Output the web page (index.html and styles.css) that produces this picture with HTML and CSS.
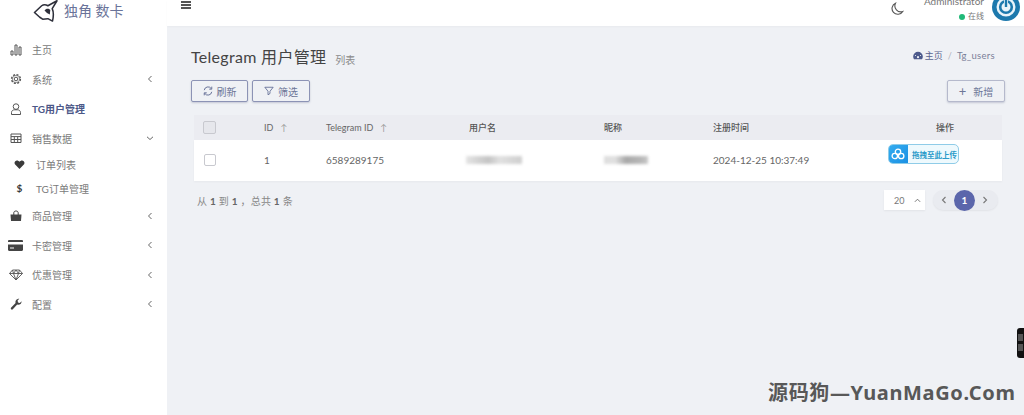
FILE: index.html
```html
<!DOCTYPE html>
<html lang="zh-CN">
<head>
<meta charset="utf-8">
<title>Telegram 用户管理</title>
<link rel="stylesheet" href="styles.css">
</head>
<body>
<div class="app">
  <aside class="sidebar">
    <div class="brand">
      <svg class="brand-icon" viewBox="0 0 26 24" width="25" height="23"><path d="M1.500 13 L9 6 C11 4.500 13.500 4.800 15.500 6 L25 .8 L20 9 C21.800 13 21.500 17 20.300 22 L15.500 19.500 L10 20 L7 18 Z" fill="none" stroke="#2d2f3a" stroke-width="1.600" stroke-linejoin="round"/><path d="M12 11 C13.500 8.500 16.500 8.500 18 10.500 L17.500 15 L14.500 13.500 Z" fill="#2d2f3a"/></svg>
      <span class="brand-name">独角 数卡</span>
    </div>
    <nav class="nav">
      <a class="nav-item">
        <svg class="ico" viewBox="0 0 12 12"><path d="M1 7h2v4H1zM5 1h2v10H5zM9 3h2v8H9z" fill="none" stroke="#555" stroke-width="1"/></svg>
        <span class="nav-label">主页</span>
      </a>
      <a class="nav-item">
        <svg class="ico" viewBox="0 0 12 12"><circle cx="6" cy="6" r="1.800" fill="none" stroke="#555"/><circle cx="6" cy="6" r="4.400" fill="none" stroke="#555" stroke-width="1.400" stroke-dasharray="2 1.450"/><circle cx="6" cy="6" r="3.600" fill="none" stroke="#555" stroke-width=".6"/></svg>
        <span class="nav-label">系统</span>
        <svg class="chev" viewBox="0 0 8 8"><path d="M5.500 1 L2.500 4 L5.500 7" fill="none" stroke="#666"/></svg>
      </a>
      <a class="nav-item is-active">
        <svg class="ico" viewBox="0 0 12 12"><circle cx="6" cy="3.600" r="2.800" fill="none" stroke="#555"/><path d="M1.500 11.500 V9.500 C1.500 7.800 3 6.800 4.500 6.800 H7.500 C9 6.800 10.500 7.800 10.500 9.500 V11.500 Z" fill="none" stroke="#555"/></svg>
        <span class="nav-label">TG用户管理</span>
      </a>
      <a class="nav-item">
        <svg class="ico" viewBox="0 0 12 12"><path d="M1 2h10v8.500H1zM1 4.600h10M1 7.500h10M4.300 4.600v6M7.700 4.600v6" fill="none" stroke="#555"/></svg>
        <span class="nav-label">销售数据</span>
        <svg class="chev" viewBox="0 0 8 8"><path d="M1 2.800 L4 5.500 L7 2.800" fill="none" stroke="#666"/></svg>
      </a>
      <div class="subnav">
        <a class="sub-item">
          <svg class="sub-ico" viewBox="0 0 12 12"><path d="M6 11 L1 5.800 C-.2 3.500 1.400 1.500 3.200 1.500 C4.400 1.500 5.400 2.100 6 3 C6.600 2.100 7.600 1.500 8.800 1.500 C10.600 1.500 12.200 3.500 11 5.800 Z" fill="#3a3a3a"/></svg>
          <span class="nav-label">订单列表</span>
        </a>
        <a class="sub-item">
          <span class="sub-ico dollar">$</span>
          <span class="nav-label">TG订单管理</span>
        </a>
      </div>
      <a class="nav-item">
        <svg class="ico" viewBox="0 0 12 12"><path d="M.5 4.500h11L11 11H1z" fill="#444"/><path d="M3.800 5V2.800C3.800 1.600 4.800 1 6 1S8.200 1.600 8.200 2.800V5" fill="none" stroke="#444"/></svg>
        <span class="nav-label">商品管理</span>
        <svg class="chev" viewBox="0 0 8 8"><path d="M5.500 1 L2.500 4 L5.500 7" fill="none" stroke="#666"/></svg>
      </a>
      <a class="nav-item">
        <svg class="ico ico-wide" viewBox="0 0 15 11"><path d="M0 1.200C0 .5.500 0 1.200 0h12.600c.7 0 1.200.5 1.200 1.200V2H0zM0 4.500h15v5.300c0 .7-.5 1.200-1.200 1.200H1.200C.5 11 0 10.500 0 9.800zM2 7.500v1h4v-1z" fill="#444"/></svg>
        <span class="nav-label">卡密管理</span>
        <svg class="chev" viewBox="0 0 8 8"><path d="M5.500 1 L2.500 4 L5.500 7" fill="none" stroke="#666"/></svg>
      </a>
      <a class="nav-item">
        <svg class="ico ico-gem" viewBox="0 0 14 12"><path d="M3.500 1h7l3 3.500L7 11 .5 4.500zM.5 4.500h13M4.500 4.500 7 11l2.500-6.500M3.500 1l1 3.500L7 1l2.500 3.500 1-3.500" fill="none" stroke="#555" stroke-width=".9"/></svg>
        <span class="nav-label">优惠管理</span>
        <svg class="chev" viewBox="0 0 8 8"><path d="M5.500 1 L2.500 4 L5.500 7" fill="none" stroke="#666"/></svg>
      </a>
      <a class="nav-item">
        <svg class="ico" viewBox="0 0 12 12"><path d="M1.500 11.500 C.6 10.800.6 10 1.200 9.400L5.600 5C5 3 6.500.6 9.300.8L7.600 2.600l.4 1.800 1.800.5 1.800-1.700C11.700 6 9.200 7.300 7.200 6.600L2.800 11.200c-.4.500-.9.600-1.300.3z" fill="#444"/></svg>
        <span class="nav-label">配置</span>
        <svg class="chev" viewBox="0 0 8 8"><path d="M5.500 1 L2.500 4 L5.500 7" fill="none" stroke="#666"/></svg>
      </a>
    </nav>
  </aside>

  <div class="main">
    <header class="topbar">
      <div class="hamburger"><i></i><i></i><i></i></div>
      <div class="topbar-right">
        <svg class="moon" viewBox="0 0 14 14" width="14" height="14"><path d="M5.500 1.200 A5.800 5.800 0 1 0 12.800 9.500 A6 6 0 0 1 5.500 1.200 Z" fill="none" stroke="#555" stroke-width="1.100"/></svg>
        <div class="user">
          <div class="user-name">Administrator</div>
          <div class="user-status"><i class="dot"></i>在线</div>
        </div>
        <svg class="avatar" viewBox="0 0 28 28" width="28" height="28"><circle cx="14" cy="14" r="14" fill="#1d79ad"/><circle cx="14" cy="14" r="9.500" fill="#e9f4fa"/><circle cx="14" cy="14" r="5.800" fill="none" stroke="#1d79ad" stroke-width="2.600"/><path d="M14 6v8" stroke="#e9f4fa" stroke-width="4"/><path d="M14 7v7" stroke="#1d79ad" stroke-width="2.400"/></svg>
      </div>
    </header>

    <section class="content">
      <div class="page-head">
        <div class="page-title"><h1>Telegram 用户管理</h1><small>列表</small></div>
        <div class="crumbs">
          <svg viewBox="0 0 12 10" width="10" height="9"><path d="M6 .5A5.800 5.800 0 0 0 .2 6.300c0 1.200.4 2.300 1 3.200h9.600c.6-.9 1-2 1-3.200A5.800 5.800 0 0 0 6 .5z" fill="#4d5a8c"/><circle cx="6" cy="7" r="1.300" fill="#eff1f5"/><circle cx="3" cy="5" r=".7" fill="#eff1f5"/><circle cx="9" cy="5" r=".7" fill="#eff1f5"/></svg>
          <a>主页</a><span class="sep">/</span><span class="crumb-cur">Tg_users</span>
        </div>
      </div>

      <div class="toolbar">
        <div class="btn-group">
          <button class="btn">
            <svg viewBox="0 0 12 12" width="10" height="10"><path d="M1.500 5A4.600 4.600 0 0 1 9.800 3M10.500 7A4.600 4.600 0 0 1 2.200 9" fill="none" stroke="#5c6791" stroke-width="1.100"/><path d="M10.500 .8v3H7.500M1.500 11.200v-3h3" fill="none" stroke="#5c6791" stroke-width="1.100"/></svg>刷新
          </button>
          <button class="btn">
            <svg viewBox="0 0 12 12" width="10" height="10"><path d="M1 1.500h10L7.200 6.300V9L4.800 10.500V6.300z" fill="none" stroke="#5c6791"/></svg>筛选
          </button>
        </div>
        <button class="btn btn-add"><span class="plus">+</span>新增</button>
      </div>

      <div class="table">
        <div class="row row-head">
          <span class="cb"></span>
          <span>ID<em class="sort">↑</em></span>
          <span>Telegram ID<em class="sort">↑</em></span>
          <b>用户名</b>
          <b>昵称</b>
          <b>注册时间</b>
          <b class="th-action">操作</b>
        </div>
        <div class="row row-body">
          <span class="cb cb-body"></span>
          <span>1</span>
          <span>6589289175</span>
          <span class="mask mask-a"></span>
          <span class="mask mask-b"></span>
          <span>2024-12-25 10:37:49</span>
          <span class="upload">
            <span class="upload-ico"><svg viewBox="0 0 14 12" width="14" height="12"><circle cx="7" cy="3.800" r="2.700" fill="none" stroke="#fff" stroke-width="1.300"/><circle cx="3.800" cy="8" r="2.700" fill="none" stroke="#fff" stroke-width="1.300"/><circle cx="10.200" cy="8" r="2.700" fill="none" stroke="#fff" stroke-width="1.300"/></svg></span>
            <span class="upload-text">拖拽至此上传</span>
          </span>
        </div>
      </div>

      <div class="foot">
        <div class="foot-info">从 <b>1</b> 到 <b>1</b> ，总共 <b>1</b> 条</div>
        <div class="pager">
          <div class="per-page"><span>20</span><svg viewBox="0 0 8 8" width="7" height="7"><path d="M1 5.500 L4 2.500 L7 5.500" fill="none" stroke="#666"/></svg></div>
          <div class="pages">
            <svg viewBox="0 0 8 8" width="8" height="8"><path d="M5.500 1 L2.500 4 L5.500 7" fill="none" stroke="#777" stroke-width="1.100"/></svg>
            <span class="page-cur">1</span>
            <svg viewBox="0 0 8 8" width="8" height="8"><path d="M2.500 1 L5.500 4 L2.500 7" fill="none" stroke="#777" stroke-width="1.100"/></svg>
          </div>
        </div>
      </div>
    </section>
  </div>
</div>
<div class="side-tab"><i></i><i></i></div>
<div class="watermark">源码狗—YuanMaGo.Com</div>
</body>
</html>
```

FILE: styles.css
```css
* { box-sizing: border-box; }
html, body { margin: 0; height: 100%; overflow: hidden; }
body {
  font-family: Lato, "Noto Sans CJK SC", sans-serif;
  background: #eff1f5;
  color: #666;
  font-size: 10px;
}
.app { display: flex; height: 415px; }

/* sidebar */
.sidebar { width: 167px; flex: none; background: #fff; }
.brand { height: 35px; padding: 0 0 13px 33px; display: flex; align-items: center; gap: 6px; }
.brand-icon { flex: none; }
.brand-name { font-size: 14px; color: #6a7399; line-height: 20px; white-space: nowrap; }
.nav { display: flex; flex-direction: column; }
.nav-item { height: 29.5px; display: flex; align-items: center; padding: 0 13px 0 10px; }
.nav-label { color: #7a7a7a; font-size: 10px; white-space: nowrap; }
.ico { width: 12px; height: 12px; flex: none; margin-right: 10px; }
.ico-wide { width: 15px; height: 11px; margin-left: -2px; margin-right: 9px; }
.ico-gem { width: 14px; height: 12px; margin-left: -1px; margin-right: 9px; }
.chev { width: 8px; height: 8px; margin-left: auto; flex: none; }
.is-active .nav-label { color: #4c5888; font-weight: 700; }
.subnav { display: flex; flex-direction: column; margin-bottom: 1px; }
.sub-item { height: 23.5px; display: flex; align-items: center; padding-left: 14px; }
.sub-ico { width: 11px; height: 11px; margin-right: 11px; flex: none; }
.dollar { font-size: 10px; font-weight: 700; color: #3a3a3a; line-height: 11px; text-align: center; }

/* main */
.main { flex: 1; min-width: 0; display: flex; flex-direction: column; }
.topbar {
  height: 26px; flex: none; background: #fff; display: flex; justify-content: space-between;
  padding: 0 4px 0 14px; overflow: hidden;
  box-shadow: 0 1px 2px rgba(0,0,0,.03);
}
.hamburger { display: flex; flex-direction: column; gap: 1.500px; width: 10px; padding-top: 1px; }
.hamburger i { display: block; height: 1.500px; background: #555; }
.topbar-right { display: flex; align-items: flex-start; }
.moon { margin-top: 2px; margin-right: 20px; }
.user { text-align: right; margin-top: -6px; margin-right: 8px; }
.user-name { font-size: 10px; line-height: 14px; color: #777; }
.user-status { font-size: 8px; line-height: 11px; padding-top: 3px; color: #777; display: flex; align-items: center; justify-content: flex-end; }
.dot { width: 6px; height: 6px; border-radius: 50%; background: #21b978; margin-right: 3px; }
.avatar { margin-top: -7px; flex: none; }

.content { padding: 21px 19px 0 24px; flex: 1; }
.page-head { display: flex; justify-content: space-between; align-items: center; height: 20px; }
.page-title { display: flex; align-items: center; gap: 9px; }
.page-title h1 { margin: 0; font-size: 16px; font-weight: 400; color: #444; line-height: 20px; letter-spacing: .3px; white-space: nowrap; }
.page-title small { font-size: 10px; color: #8a8a8a; padding-top: 4px; }
.crumbs { display: flex; align-items: center; font-size: 9px; color: #5a648f; gap: 2px; margin: -4px 10px 0 0; }
.sep { color: #b0b3bd; margin: 0 3px; }
.crumb-cur { color: #7a8098; font-size: 9.500px; letter-spacing: .3px; }
.toolbar { display: flex; justify-content: space-between; margin-top: 13px; height: 22px; }
.btn-group { display: flex; gap: 4px; }
.btn {
  width: 58px; height: 22px; background: #eff1f5; border: 1px solid #8c93b5; border-radius: 2px;
  box-shadow: 0 1px 2px rgba(70,80,120,.25); color: #6d7697; font-family: inherit; font-size: 10px;
  display: flex; align-items: center; justify-content: center; gap: 4px; padding: 0;
}
.btn-group .btn:first-child { width: 57px; }
.btn-add { border-color: #b5b9cc; }
.plus { font-size: 13px; line-height: 14px; margin-right: 3px; }

.table { margin: 13px 3px 0; }
.row { display: grid; grid-template-columns: 70px 62px 143px 135px 109px 175px 1fr; align-items: center; }
.row-head { height: 25px; background: #ebecf1; font-size: 9px; color: #666; }
.row-head b { color: #555; font-size: 9px; font-weight: 500; }
.row-head .th-action { padding-left: 48px; }
.row-body { height: 41px; padding-bottom: 2px; background: #fff; font-size: 10px; color: #666; box-shadow: 0 1px 2px rgba(0,0,0,.04); }
.sort { font-style: normal; color: #999; margin-left: 7px; }
.cb { width: 13px; height: 13px; border: 1px solid #c8c9cf; background: #e6e7ec; border-radius: 2px; margin-left: 9px; }
.cb-body { width: 12px; height: 12px; background: #fff; margin-left: 10px; }
.mask { height: 8px; background: linear-gradient(90deg, #e4e4e4, #c4c4c4 40%, #e0e0e0 60%, #cfcfcf); filter: blur(1.500px); }
.mask-a { width: 56px; margin-left: -3px; }
.mask-b { width: 44px; background: linear-gradient(90deg, #dedede, #e0e0e0 25%, #a8a8a8 50%, #b8b8b8 85%, #c8c8c8); }
.upload {
  display: flex; width: 71px; height: 20px; border: 1px solid #8fcce8; border-radius: 5px; background: #eef9fd; overflow: hidden; align-items: center; margin-top: -11px;
}
.upload-ico { width: 20px; height: 20px; margin: -1px 0 -1px -1px; flex: none; background: linear-gradient(135deg, #35aef0, #1a8fe3); display: flex; align-items: center; justify-content: center; }
.upload-text { font-size: 7.500px; font-weight: 700; color: #2b9bc9; padding-left: 4px; white-space: nowrap; }

.foot { display: flex; justify-content: space-between; margin: 8px 7px 0 6px; align-items: center; height: 22px; }
.foot-info { font-size: 10px; color: #888; letter-spacing: .2px; }
.foot-info b { color: #666; }
.pager { display: flex; align-items: center; gap: 8px; }
.per-page { width: 41px; height: 20px; background: #fff; display: flex; align-items: center; justify-content: space-between; padding: 0 4px 0 10px; font-size: 9px; color: #777; box-shadow: 0 1px 2px rgba(0,0,0,.06); }
.pages { width: 65px; height: 20px; background: #e9ebf0; border-radius: 10px; display: flex; align-items: center; justify-content: space-between; padding: 0 9px 0 7px; box-shadow: 0 1px 2px rgba(0,0,0,.06); }
.page-cur { width: 21px; height: 21px; border-radius: 50%; background: #5b66ab; color: #fff; font-size: 10px; font-weight: 700; display: flex; align-items: center; justify-content: center; }

/* overlays */
.side-tab { position: absolute; right: 0; top: 328px; width: 7px; height: 30px; background: #111; border-radius: 3px 0 0 3px; padding: 6px 1px; display: flex; flex-direction: column; gap: 3px; }
.side-tab i { display: block; height: 7px; background: #555; }
.watermark { position: absolute; left: 768px; top: 379px; font-family: "Noto Sans", "Noto Sans CJK SC", sans-serif; font-size: 20px; font-weight: 700; color: #585858; line-height: 28px; letter-spacing: .65px; white-space: nowrap; }
```
